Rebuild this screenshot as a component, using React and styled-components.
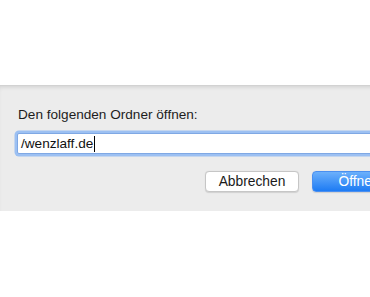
import React from 'react';
import styled, { createGlobalStyle } from 'styled-components';

const GlobalStyle = createGlobalStyle`
  html, body {
    margin: 0;
    padding: 0;
    background: #ffffff;
  }
  body {
    font-family: "Liberation Sans", "Noto Sans", Arial, sans-serif;
    overflow: hidden;
  }
`;

const App = () => {
  return (
    <Page>
      <GlobalStyle />
      <Sheet>
        <Label>Den folgenden Ordner öffnen:</Label>
        <PathField>
          <PathText>/wenzlaff.de</PathText>
          <Caret />
        </PathField>
        <ButtonRow>
          <Button>Abbrechen</Button>
          <Button $primary>Öffnen</Button>
        </ButtonRow>
      </Sheet>
    </Page>
  );
};

const Page = styled.div`
  width: 370px;
  height: 297px;
  padding-top: 85px;
  box-sizing: border-box;
  background: #ffffff;
  overflow: hidden;
`;

const Sheet = styled.div`
  width: 480px;
  height: 126px;
  background: #ececec;
  box-shadow: inset 0 1px 0 #d2d2d2, inset 0 4px 4px -2px rgba(0, 0, 0, 0.12);
  padding: 22px 0 0 18px;
  box-sizing: border-box;
  display: flex;
  flex-direction: column;
`;

const Label = styled.div`
  font-size: 13.6px;
  color: #1d1d1d;
  line-height: 16px;
  height: 16px;
`;

const PathField = styled.div`
  margin-top: 10px;
  margin-left: -1px;
  width: 440px;
  height: 19px;
  background: #ffffff;
  border: 1px solid #7fa8e4;
  border-radius: 2px;
  box-shadow: 0 0 0 2.5px #9cc0f2;
  display: flex;
  align-items: center;
  padding-left: 3px;
  box-sizing: content-box;
`;

const PathText = styled.span`
  font-size: 13.6px;
  color: #111111;
  line-height: 16px;
`;

const Caret = styled.span`
  width: 1px;
  height: 16px;
  background: #000000;
  margin-left: 1px;
`;

const ButtonRow = styled.div`
  display: flex;
  gap: 13px;
  margin-top: 17px;
  margin-left: 187px;
`;

const Button = styled.div`
  flex: none;
  width: 92px;
  height: 19px;
  box-sizing: content-box;
  border-radius: 4px;
  font-size: 13.8px;
  line-height: 19px;
  text-align: center;
  color: ${(p) => (p.$primary ? '#ffffff' : '#1a1a1a')};
  background: ${(p) => (p.$primary ? 'linear-gradient(#6cb0fb, #1d7bf4)' : '#ffffff')};
  border: 1px solid ${(p) => (p.$primary ? '#4a8ff0' : '#c6c6c6')};
  box-shadow: 0 0.5px 1px rgba(0, 0, 0, 0.12);
`;

export default App;
